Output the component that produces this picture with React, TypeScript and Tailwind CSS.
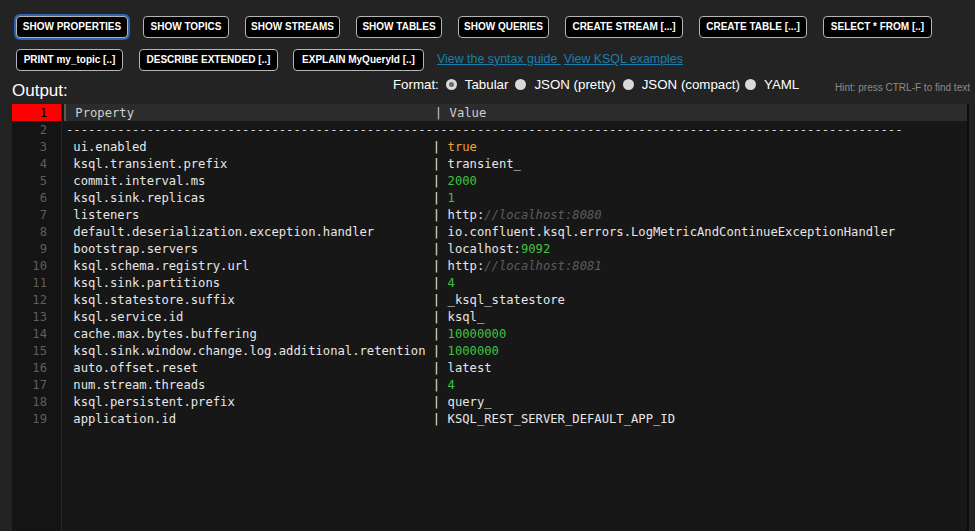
import React from "react";

const btn =
  "h-[22px] shrink-0 bg-black border border-[#b5b5b5] rounded-[4px] text-white text-[10px] font-bold whitespace-nowrap flex items-center justify-center leading-none";

type Seg = { t: string; c?: string };
const W = "text-[#e6e6e6]";
const G = "text-[#3fc43f]";
const O = "text-[#f0a22e]";
const C = "text-[#5c5c5c] italic";

const rows: [string, Seg[]][] = [
  ["ui.enabled", [{ t: "true", c: O }]],
  ["ksql.transient.prefix", [{ t: "transient_" }]],
  ["commit.interval.ms", [{ t: "2000", c: G }]],
  ["ksql.sink.replicas", [{ t: "1", c: G }]],
  ["listeners", [{ t: "http:" }, { t: "//localhost:8080", c: C }]],
  ["default.deserialization.exception.handler", [{ t: "io.confluent.ksql.errors.LogMetricAndContinueExceptionHandler" }]],
  ["bootstrap.servers", [{ t: "localhost:" }, { t: "9092", c: G }]],
  ["ksql.schema.registry.url", [{ t: "http:" }, { t: "//localhost:8081", c: C }]],
  ["ksql.sink.partitions", [{ t: "4", c: G }]],
  ["ksql.statestore.suffix", [{ t: "_ksql_statestore" }]],
  ["ksql.service.id", [{ t: "ksql_" }]],
  ["cache.max.bytes.buffering", [{ t: "10000000", c: G }]],
  ["ksql.sink.window.change.log.additional.retention", [{ t: "1000000", c: G }]],
  ["auto.offset.reset", [{ t: "latest" }]],
  ["num.stream.threads", [{ t: "4", c: G }]],
  ["ksql.persistent.prefix", [{ t: "query_" }]],
  ["application.id", [{ t: "KSQL_REST_SERVER_DEFAULT_APP_ID" }]],
];

function Radio({ on }: { on?: boolean }) {
  return (
    <span className="w-[11px] h-[11px] rounded-full bg-[#d9d9d9] flex items-center justify-center shrink-0">
      {on && <span className="w-[5px] h-[5px] rounded-full bg-[#6b6b6b]" />}
    </span>
  );
}

export default function App() {
  const lineCls = "h-[17px] leading-[19px] whitespace-pre";
  return (
    <div
      className="w-[975px] h-[531px] bg-[#232323] overflow-hidden flex flex-col"
      style={{ fontFamily: "'Liberation Sans', Arial, sans-serif" }}
    >
      {/* Row 1 */}
      <div className="flex gap-4 pl-4 pt-[16px]">
        <button className={btn + " w-[112px] shadow-[0_0_0_2px_#2f63ad]"}>SHOW PROPERTIES</button>
        <button className={btn + " w-[86px] ml-[-1px]"}>SHOW TOPICS</button>
        <button className={btn + " w-[95px]"}>SHOW STREAMS</button>
        <button className={btn + " w-[86px]"}>SHOW TABLES</button>
        <button className={btn + " w-[91px]"}>SHOW QUERIES</button>
        <button className={btn + " w-[118px]"}>CREATE STREAM [...]</button>
        <button className={btn + " w-[108px]"}>CREATE TABLE [...]</button>
        <button className={btn + " w-[109px]"}>SELECT * FROM [..]</button>
      </div>
      {/* Row 2 */}
      <div className="flex items-center gap-4 pl-4 mt-[11px]">
        <button className={btn + " w-[107px]"}>PRINT my_topic [..]</button>
        <button className={btn + " w-[139px]"}>DESCRIBE EXTENDED [..]</button>
        <button className={btn + " w-[131px] ml-[-1px]"}>EXPLAIN MyQueryId [..]</button>
        <div className="flex text-[12.4px] text-[#1b7fae] ml-[-3px] mt-[-2px]">
          <span className="underline whitespace-pre">View the syntax guide </span>
          <span className="underline ml-[3px]">View KSQL examples</span>
        </div>
      </div>
      {/* Output row */}
      <div className="flex h-[33px] items-start relative">
        <div className="pl-3 pt-[11px] text-[17px] text-white leading-none">Output:</div>
        <div className="absolute left-[393px] top-[7px] flex items-center text-[13.3px] text-white leading-none">
          <span>Format:</span>
          <span className="ml-[7px]"><Radio on /></span>
          <span className="ml-[8px]">Tabular</span>
          <span className="ml-[7px]"><Radio /></span>
          <span className="ml-[8px]">JSON (pretty)</span>
          <span className="ml-[7px]"><Radio /></span>
          <span className="ml-[8px]">JSON (compact)</span>
          <span className="ml-[5px]"><Radio /></span>
          <span className="ml-[8px]">YAML</span>
        </div>
        <div className="absolute right-[5px] top-[12px] text-[10px] text-[#8a8a8a] leading-none">
          Hint: press CTRL-F to find text
        </div>
      </div>
      {/* Editor */}
      <div
        className="ml-3 w-[957px] flex-1 bg-[#171717] border-r-2 border-[#0d0d0d] flex text-[12.2px]"
        style={{ fontFamily: "'DejaVu Sans Mono', 'Liberation Mono', monospace" }}
      >
        <div className="w-[50px] bg-[#141414] border-r border-[#262626] text-[#5e5e5e] text-right">
          <div className={lineCls + " bg-[#ff0000] text-black pr-[14px]"}>1</div>
          {Array.from({ length: 18 }, (_, i) => (
            <div key={i} className={lineCls + " pr-[14px]"}>
              {i + 2}
            </div>
          ))}
        </div>
        <div className="flex-1 pl-[4px]">
          <div className={lineCls + " bg-[#2c2c2c] text-[#d0d0d0] -ml-[2px] pl-[2px] border-l-2 border-[#5a5a5a]"}>
            {" " + "Property".padEnd(48) + " | Value"}
          </div>
          <div className={lineCls + " text-[#d8d8d8]"}>{"-".repeat(114)}</div>
          {rows.map(([k, v], i) => (
            <div key={i} className={lineCls + " " + W}>
              {" " + k.padEnd(48) + " | "}
              {v.map((s, j) => (
                <span key={j} className={s.c || W}>
                  {s.t}
                </span>
              ))}
            </div>
          ))}
        </div>
      </div>
    </div>
  );
}
